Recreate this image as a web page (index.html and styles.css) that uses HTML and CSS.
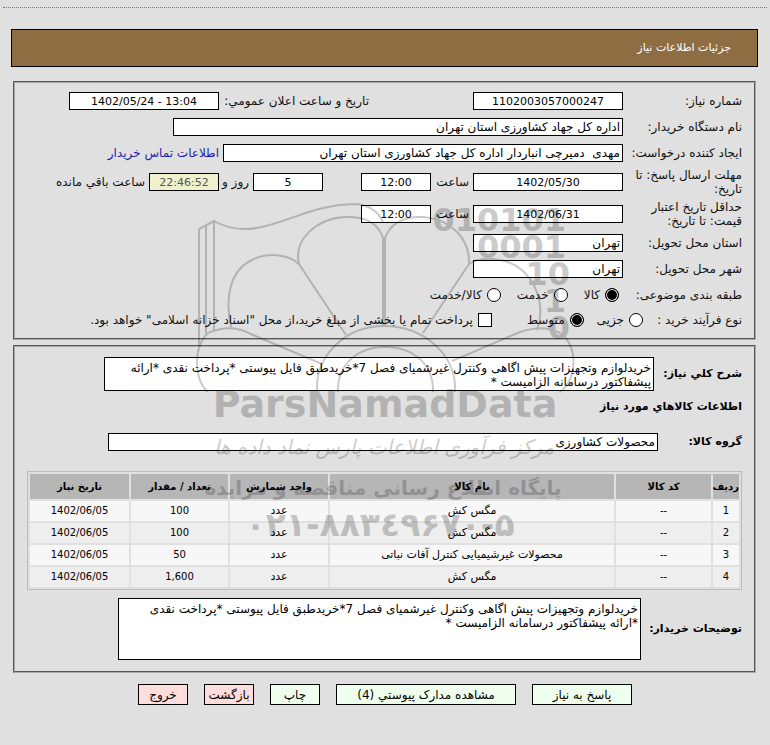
FILE: index.html
```
<!DOCTYPE html>
<html lang="fa" dir="rtl">
<head>
  <meta charset="UTF-8">
  <meta name="viewport" content="width=device-width,initial-scale=1">
  <title>جزئیات اطلاعات نیاز</title>
  <link rel="stylesheet" href="styles.css">
</head>
<body>
  <div class="page">
    <hr class="top-line">
    <h1 class="title">جزئیات اطلاعات نیاز</h1>

    <form>
      <fieldset class="box">
        <div class="row">
          <label class="name" for="needNo">شماره نیاز:</label>
          <input class="w150 center" id="needNo" type="text" value="1102003057000247" readonly>
          <label class="announce" for="announceDate">تاریخ و ساعت اعلان عمومي:</label>
          <input class="w150 center" id="announceDate" type="text" dir="ltr" value="1402/05/24 - 13:04" readonly>
        </div>
        <div class="row">
          <label class="name" for="buyer">نام دستگاه خریدار:</label>
          <input class="w450" id="buyer" type="text" value="اداره کل جهاد کشاورزی استان تهران" readonly>
        </div>
        <div class="row">
          <label class="name" for="creator">ایجاد کننده درخواست:</label>
          <input class="w400" id="creator" type="text" value="مهدی  دمیرچی انباردار اداره کل جهاد کشاورزی استان تهران" readonly>
          <a href="#">اطلاعات تماس خریدار</a>
        </div>
        <div class="row tall">
          <label class="name" for="deadline">مهلت ارسال پاسخ: تا تاریخ:</label>
          <input class="w150 center" id="deadline" type="text" dir="ltr" value="1402/05/30" readonly>
          <label class="hour" for="deadlineHour">ساعت</label>
          <input class="w70 center" id="deadlineHour" type="text" dir="ltr" value="12:00" readonly>
          <input class="w70 center days" id="days" type="text" value="5" readonly>
          <label class="and" for="days">روز و</label>
          <input class="w70 center remain" id="remain" type="text" dir="ltr" value="22:46:52" readonly>
          <label for="remain">ساعت باقي مانده</label>
        </div>
        <div class="row tall">
          <label class="name" for="validity">حداقل تاریخ اعتبار قیمت: تا تاریخ:</label>
          <input class="w150 center" id="validity" type="text" dir="ltr" value="1402/06/31" readonly>
          <label class="hour" for="validityHour">ساعت</label>
          <input class="w70 center" id="validityHour" type="text" dir="ltr" value="12:00" readonly>
        </div>
        <div class="row">
          <label class="name" for="province">استان محل تحویل:</label>
          <input class="w150" id="province" type="text" value="تهران" readonly>
        </div>
        <div class="row">
          <label class="name" for="city">شهر محل تحویل:</label>
          <input class="w150" id="city" type="text" value="تهران" readonly>
        </div>
        <div class="row options">
          <span class="name">طبقه بندی موضوعی:</span>
          <label class="option"><input type="radio" name="subject" checked>کالا</label>
          <label class="option"><input type="radio" name="subject">خدمت</label>
          <label class="option"><input type="radio" name="subject">کالا/خدمت</label>
        </div>
        <div class="row process">
          <span class="name">نوع فرآیند خرید :</span>
          <label class="option"><input type="radio" name="process">جزیی</label>
          <label class="option"><input type="radio" name="process" checked>متوسط</label>
          <label class="option treasury"><input type="checkbox">پرداخت تمام یا بخشی از مبلغ خرید،از محل "اسناد خزانه اسلامی" خواهد بود.</label>
        </div>
      </fieldset>

      <fieldset class="box goods">
        <div class="line summary">
          <label class="bold" for="summary">شرح کلي نیاز:</label>
          <textarea id="summary" rows="2" readonly>خریدلوازم وتجهیزات پیش اگاهی وکنترل غیرشمیای فصل 7*خریدطبق فایل پیوستی *پرداخت نقدی *ارائه
پیشفاکتور درسامانه الزامیست *</textarea>
        </div>
        <h2 class="bold">اطلاعات کالاهاي مورد نیاز</h2>
        <div class="line group">
          <label class="bold" for="group">گروه کالا:</label>
          <input id="group" type="text" value="محصولات کشاورزی" readonly>
        </div>
        <table>
          <colgroup>
            <col class="c-row">
            <col class="c-code">
            <col>
            <col class="c-unit">
            <col class="c-count">
            <col class="c-date">
          </colgroup>
          <thead>
            <tr><th>ردیف</th><th>کد کالا</th><th>نام کالا</th><th>واحد شمارش</th><th>تعداد / مقدار</th><th>تاریخ نیاز</th></tr>
          </thead>
          <tbody>
            <tr><td>1</td><td>--</td><td class="fa">مگس کش</td><td class="fa">عدد</td><td>100</td><td dir="ltr">1402/06/05</td></tr>
            <tr><td>2</td><td>--</td><td class="fa">مگس کش</td><td class="fa">عدد</td><td>100</td><td dir="ltr">1402/06/05</td></tr>
            <tr><td>3</td><td>--</td><td class="fa">محصولات غیرشیمیایی کنترل آفات نباتی</td><td class="fa">عدد</td><td>50</td><td dir="ltr">1402/06/05</td></tr>
            <tr><td>4</td><td>--</td><td class="fa">مگس کش</td><td class="fa">عدد</td><td>1,600</td><td dir="ltr">1402/06/05</td></tr>
          </tbody>
        </table>
        <div class="line notes">
          <label class="bold" for="notes">توضیحات خریدار:</label>
          <textarea id="notes" rows="4" readonly>خریدلوازم وتجهیزات پیش اگاهی وکنترل غیرشمیای فصل 7*خریدطبق فایل پیوستی *پرداخت نقدی
*ارائه پیشفاکتور درسامانه الزامیست *</textarea>
        </div>
      </fieldset>

      <div class="buttons">
        <button type="button" class="w100">پاسخ به نیاز</button>
        <button type="button" class="w180">مشاهده مدارک پیوستي (4)</button>
        <button type="button">چاپ</button>
        <button type="button" class="red">بازگشت</button>
        <button type="button" class="red">خروج</button>
      </div>
    </form>

    <svg class="watermark" viewBox="0 0 400 360" direction="ltr" aria-hidden="true">
      <g class="lines">
        <!-- book spine and cover -->
        <path d="M9 157V39L24 31V140M16 36V144"/>
        <path d="M24 31Q45 43 72 37C105 29 125 15 165 14Q185 15 193 32"/>
        <!-- petals -->
        <path d="M193 135V48C188 32 174 26 154 27C127 29 103 49 109 74L156 145"/>
        <path d="M195 135V48C201 32 216 26 234 27C260 30 280 47 279 74L233 143"/>
        <path d="M109 74C98 64 77 62 62 70C39 81 35 109 41 137"/>
        <path d="M279 74C293 65 320 68 334 82C350 98 354 121 347 140"/>
        <path d="M18 202C2 189 4 151 20 142C36 136 48 137 63 145L132 174"/>
        <path d="M370 202C389 188 387 153 370 143C355 136 343 138 330 142L262 171"/>
        <!-- center -->
        <path d="M127 202C125 165 156 136 194 136C234 136 267 165 265 202"/>
        <path d="M148 202C147 175 167 157 195 157C224 157 244 175 243 202"/>
      </g>
      <g class="digits">
        <text x="376" y="41">010101</text>
        <text x="376" y="68">0001</text>
        <text x="380" y="95">10</text>
        <text x="376" y="122">1</text>
        <text x="380" y="149">0</text>
      </g>
      <text class="brand" x="195" y="227">ParsNamadData</text>
      <text class="script" x="194" y="264">مرکز فرآوری اطلاعات پارس نماد داده ها</text>
      <text class="slogan" x="193" y="305">پایگاه اطلاع رسانی مناقصه و مزایده</text>
      <text class="phone" x="190" y="346">۰۲۱-۸۸۳٤۹۶۷۰-۵</text>
    </svg>
  </div>
</body>
</html>
```
FILE: styles.css
```
*{
  box-sizing: border-box;
}
body{
  margin: 0;
  background: #e0e0e0;
  color: #111;
  font: 12px/14px "DejaVu Sans", sans-serif;
}
.page{
  position: relative;
  padding: 7px 3px 20px;
}
.top-line{
  margin: 0;
  border: 0;
  border-top: 1px dotted #777;
}
.title{
  margin: 21px 9px 14px 8px;
  padding: 11px 26px;
  border: 1px solid #000;
  background: #8f6d42;
  color: #fff;
  font-size: 11px;
  line-height: 14px;
  font-weight: normal;
}
.box{
  margin: 0 11px 5px 10px;
  padding: 5px 12px 6px;
  min-width: 0;
  border: 2px groove #aaa;
}

/* fields */
input, textarea, button{
  margin: 0;
  padding: 0 2px;
  border: 1px solid #000;
  border-radius: 0;
  background: #fff;
  color: #000;
  font: inherit;
}
input[type=text]{
  height: 18px;
  min-width: 0;
}
textarea{
  display: block;
  resize: none;
  overflow: hidden;
}
a{
  color: #1c1cb0;
  text-decoration: none;
}
.row{
  display: flex;
  align-items: center;
  gap: 4px;
  min-height: 26px;
}
.row.tall{
  min-height: 32px;
}
.name{
  flex: none;
  width: 115px;
}
input.center{
  font-size: 11px;
  text-align: center;
}
.w150{width: 150px;}
.w450{width: 450px;}
.w400{width: 400px;}
.w70{width: 70px;}
.hour, .and{
  flex: none;
  width: 34px;
}
.and{
  width: 26px;
  white-space: nowrap;
}
.announce{
  width: 146px;
  margin-right: 100px;
  white-space: nowrap;
}
.days{
  margin-right: 34px;
}
input.remain{
  background: #f0f0cc;
  color: #555;
}

/* radios */
.options{
  gap: 16px;
}
.options .name{
  width: 107px;
}
.process{
  gap: 13px;
  min-height: 24px;
}
.process .name{
  width: 86px;
  white-space: nowrap;
}
.option{
  display: flex;
  align-items: center;
  gap: 5px;
  white-space: nowrap;
}
.treasury{
  margin-right: 22px;
}
input[type=radio], input[type=checkbox]{
  appearance: none;
  width: 14px;
  height: 14px;
  padding: 0;
}
input[type=radio]{
  border-radius: 50%;
}
input[type=radio]:checked{
  background: #000;
  box-shadow: inset 0 0 0 1px #fff;
}
input[type=checkbox]:checked{
  background: #000;
  box-shadow: inset 0 0 0 2px #fff;
}

/* goods */
.goods{
  padding: 10px 12px 11px;
}
.bold{
  margin: 0;
  color: #000;
  font-size: 11px;
  line-height: 14px;
  font-weight: bold;
}
.line{
  display: flex;
  align-items: center;
}
.line .bold{
  flex: none;
}
.summary .bold{width: 88px;}
.group .bold{width: 84px;}
.notes .bold{width: 101px;}
.summary textarea{
  width: 550px;
  height: 34px;
  padding-top: 3px;
}
h2.bold{
  margin: 9px 0 19px;
}
.group input{
  width: 550px;
}
table{
  width: 100%;
  margin: 20px 0 8px;
  border: 1px solid #bbb;
  border-spacing: 2px;
  table-layout: fixed;
  font: 10px/14px "DejaVu Sans", sans-serif;
  color: #000;
}
.c-row{width: 26px;}
.c-code{width: 95px;}
.c-unit{width: 98px;}
.c-count{width: 97px;}
.c-date{width: 99px;}
th, td{
  height: 20px;
  padding: 0;
  text-align: center;
  white-space: nowrap;
}
th{
  height: 25px;
  background: #b6b6b6;
}
td{
  background: #f7f7f7;
}
td.fa{
  font-size: 11px;
}
tr:nth-child(even) td{
  background: #eee;
}
.notes textarea{
  width: 523px;
  height: 62px;
  padding-top: 3px;
}

.buttons{
  display: flex;
  flex-wrap: wrap;
  justify-content: center;
  gap: 16px;
  margin-top: 11px;
}
button{
  width: 50px;
  height: 21px;
  padding: 0;
  background: #efe;
  white-space: nowrap;
}
button.w100{width: 100px;}
button.w180{width: 180px;}
button.red{
  background: #fdd;
}

/* watermark over the whole form */
.watermark{
  position: absolute;
  top: 190px;
  left: calc(50% - 195px);
  width: 400px;
  height: 360px;
  opacity: .2;
  pointer-events: none;
  direction: ltr;
}
.lines{
  fill: none;
  stroke: #000;
  stroke-width: 2;
}
.watermark text{
  font-family: "DejaVu Sans", sans-serif;
  font-weight: bold;
  text-anchor: middle;
}
.watermark .digits text{
  font-size: 32px;
  text-anchor: end;
}
.watermark .brand{
  font-size: 38px;
}
.watermark .script{
  font-size: 20px;
  font-style: italic;
  font-weight: normal;
}
.watermark .slogan{
  font-size: 20px;
}
.watermark .phone{
  font-size: 33px;
  unicode-bidi: bidi-override;
}
```
